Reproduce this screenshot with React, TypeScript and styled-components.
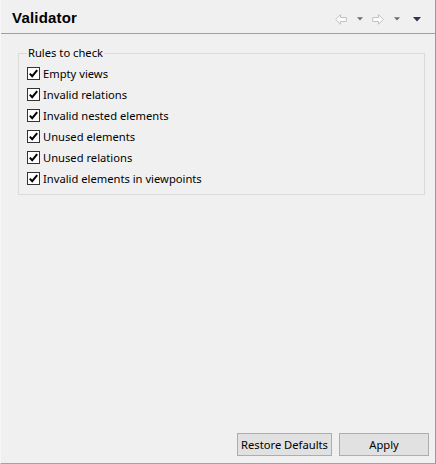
import React, { useState } from "react";
import styled, { createGlobalStyle } from "styled-components";

const GlobalStyle = createGlobalStyle`
  html, body {
    margin: 0;
    padding: 0;
    background: #f0f0f0;
  }
  * {
    box-sizing: border-box;
  }
`;

type Rule = {
  id: string;
  label: string;
};

const rules: Rule[] = [
  { id: "emptyViews", label: "Empty views" },
  { id: "invalidRelations", label: "Invalid relations" },
  { id: "invalidNested", label: "Invalid nested elements" },
  { id: "unusedElements", label: "Unused elements" },
  { id: "unusedRelations", label: "Unused relations" },
  { id: "invalidViewpoints", label: "Invalid elements in viewpoints" },
];

const ArrowIcon = ({ flip }: { flip?: boolean }) => (
  <svg width="12" height="11" viewBox="0 0 12 11" style={flip ? { transform: "scaleX(-1)" } : undefined}>
    <path
      d="M0.7 5.5 L5.5 0.7 L5.5 3.5 L11.3 3.5 L11.3 7.5 L5.5 7.5 L5.5 10.3 Z"
      fill="#fbfbfb"
      stroke="#c2c2c2"
      strokeWidth="1"
      strokeLinejoin="round"
    />
  </svg>
);

const Caret = ({ color, size }: { color: string; size: number }) => (
  <svg width={size} height={size / 2 + 1} viewBox="0 0 8 5">
    <path d="M0 0 L8 0 L4 4.5 Z" fill={color} />
  </svg>
);

const CheckMark = () => (
  <svg width="11" height="11" viewBox="0 0 11 11">
    <path d="M1.8 5.6 L4.2 8.2 L9.2 2.2" fill="none" stroke="#000" strokeWidth="2" />
  </svg>
);

const App = () => {
  const [checked, setChecked] = useState<Record<string, boolean>>(
    Object.fromEntries(rules.map((r) => [r.id, true]))
  );

  const toggle = (id: string) => {
    setChecked((prev) => ({ ...prev, [id]: !prev[id] }));
  };

  return (
    <>
      <GlobalStyle />
      <Frame>
        <Header>
          <Title>Validator</Title>
          <Toolbar>
            <ToolButton>
              <ArrowIcon />
            </ToolButton>
            <MenuButton>
              <Caret color="#6b6b6b" size={6} />
            </MenuButton>
            <ToolButton>
              <ArrowIcon flip />
            </ToolButton>
            <MenuButton>
              <Caret color="#6b6b6b" size={6} />
            </MenuButton>
            <ViewMenu>
              <Caret color="#3b2a5c" size={8} />
            </ViewMenu>
          </Toolbar>
        </Header>
        <Content>
          <Group>
            <Legend>Rules to check</Legend>
            {rules.map((rule) => (
              <Row key={rule.id} onClick={() => toggle(rule.id)}>
                <Box>{checked[rule.id] && <CheckMark />}</Box>
                <Label>{rule.label}</Label>
              </Row>
            ))}
          </Group>
        </Content>
        <Footer>
          <Button width={95}>Restore Defaults</Button>
          <Button width={90}>Apply</Button>
        </Footer>
      </Frame>
    </>
  );
};

type ButtonProps = {
  width: number;
};

const Frame = styled.div`
  width: 436px;
  height: 464px;
  display: flex;
  flex-direction: column;
  background: #f0f0f0;
  border-left: 1px solid #f7f7f7;
  border-right: 1px solid #74a3d2;
  border-bottom: 1px solid #a3a3a3;
  font-family: "Noto Sans", "Open Sans", sans-serif;
  font-size: 11.2px;
  color: #000;
`;

const Header = styled.div`
  height: 34px;
  flex-shrink: 0;
  display: flex;
  flex-direction: row;
  align-items: center;
  justify-content: space-between;
  padding: 0 10px 0 11px;
  border-bottom: 1px solid #a0a0a0;
`;

const Title = styled.div`
  font-family: "Liberation Sans", Arial, sans-serif;
  font-weight: bold;
  font-size: 15px;
  letter-spacing: 0.2px;
  margin-top: 2px;
`;

const Toolbar = styled.div`
  display: flex;
  flex-direction: row;
  align-items: center;
  margin-top: 5px;
`;

const ToolButton = styled.div`
  width: 14px;
  display: flex;
  align-items: center;
  justify-content: center;
  margin-left: 2px;
`;

const MenuButton = styled.div`
  width: 18px;
  display: flex;
  align-items: center;
  justify-content: center;
  margin-left: 3px;
`;

const ViewMenu = styled.div`
  width: 16px;
  display: flex;
  align-items: center;
  justify-content: center;
  margin-left: 3px;
`;

const Content = styled.div`
  flex: 1;
  padding: 12px 10px 0 17px;
`;

const Group = styled.fieldset`
  margin: 0;
  padding: 3px 8px 5px 8px;
  border: 1px solid #dadada;
  display: flex;
  flex-direction: column;
`;

const Legend = styled.legend`
  padding: 0 1px;
  margin-left: 0;
  line-height: 14px;
`;

const Row = styled.label`
  display: flex;
  flex-direction: row;
  align-items: center;
  height: 21px;
  cursor: default;
`;

const Box = styled.span`
  width: 13px;
  height: 13px;
  border: 1px solid #333;
  background: #fff;
  display: flex;
  align-items: center;
  justify-content: center;
  margin-right: 3px;
  flex-shrink: 0;
`;

const Label = styled.span`
  line-height: 16px;
`;

const Footer = styled.div`
  display: flex;
  flex-direction: row;
  justify-content: flex-end;
  gap: 7px;
  padding: 0 6px 7px 0;
`;

const Button = styled.button<ButtonProps>`
  width: ${({ width }) => width}px;
  height: 23px;
  padding: 0;
  background: #e1e1e1;
  border: 1px solid #adadad;
  font-family: "Noto Sans", "Open Sans", sans-serif;
  font-size: 11.2px;
  white-space: nowrap;
  color: #000;
`;

export default App;
